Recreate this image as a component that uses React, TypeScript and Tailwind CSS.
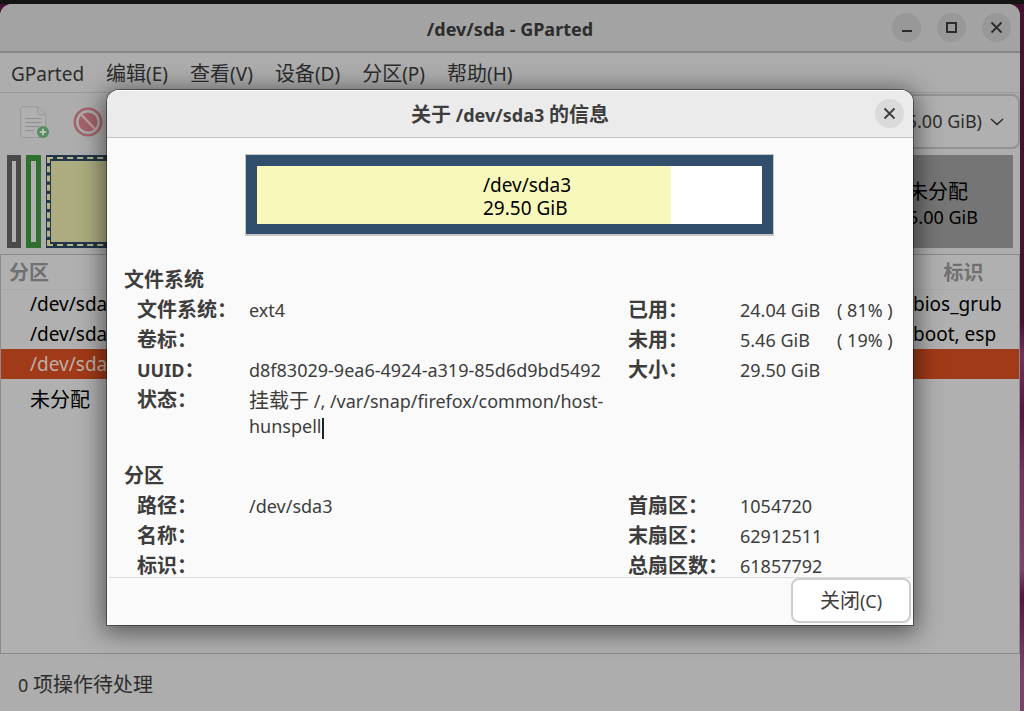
import React from "react";

const CJK = /([\u3000-\u9fff\uff00-\uffef]+)/;

/** Text that may mix Latin and Chinese runs; Chinese runs are set a little larger. */
function Mixed({ children }: { children: string }) {
  return (
    <>
      {children.split(CJK).map((part, i) =>
        CJK.test(part) ? (
          <span key={i} className="text-[20px]">
            {part}
          </span>
        ) : (
          part
        ),
      )}
    </>
  );
}

function CrossIcon() {
  return (
    <svg width="13" height="13" viewBox="0 0 13 13" fill="none" stroke="currentColor" strokeWidth="1.8" aria-hidden="true">
      <path d="M1.5 1.5 11.5 11.5M11.5 1.5 1.5 11.5" />
    </svg>
  );
}

function NewIcon() {
  return (
    <svg width="30" height="32" viewBox="0 0 30 32" fill="none" aria-hidden="true">
      <path d="M3.5.8h14.2l8 8v20.7a2 2 0 0 1-2 2H3a2.4 2.4 0 0 1-2.4-2.4V3.4A2.6 2.6 0 0 1 3.5.8Z" fill="#b0b0b0" stroke="#999" />
      <path d="M17.7.8v5.7a2.3 2.3 0 0 0 2.3 2.3h5.7" stroke="#999" />
      <path d="M5.5 12.5h16M5.5 16.5h16M5.5 20.5h14M5.5 24.5h8" stroke="#8f8f8f" />
      <circle cx="23" cy="26" r="6" fill="#568c62" />
      <path d="M23 22.7v6.6M19.7 26h6.6" stroke="#c4d2c6" strokeWidth="1.6" />
    </svg>
  );
}

function DeleteIcon() {
  return (
    <svg width="30" height="30" viewBox="0 0 30 30" fill="none" aria-hidden="true">
      <circle cx="15" cy="15" r="13.2" stroke="#a4636a" strokeWidth="2.6" />
      <circle cx="15" cy="15" r="9.5" fill="#a4636a" />
      <path d="m7.5 7 15.5 16" stroke="#b9a2a4" strokeWidth="2.4" />
    </svg>
  );
}

const menus = ["GParted", "编辑(E)", "查看(V)", "设备(D)", "分区(P)", "帮助(H)"];

const partitions = [
  { name: "/dev/sda1", flags: "bios_grub" },
  { name: "/dev/sda2", flags: "boot, esp" },
  { name: "/dev/sda3", flags: "", selected: true },
  { name: "未分配", flags: "" },
];

type Cell = { label: string; value?: string; extra?: string };

const fsLeft: Cell[] = [
  { label: "文件系统：", value: "ext4" },
  { label: "卷标：" },
  { label: "UUID：", value: "d8f83029-9ea6-4924-a319-85d6d9bd5492" },
];
const fsRight: Cell[] = [
  { label: "已用：", value: "24.04 GiB", extra: "( 81% )" },
  { label: "未用：", value: "5.46 GiB", extra: "( 19% )" },
  { label: "大小：", value: "29.50 GiB" },
];
const partLeft: Cell[] = [{ label: "路径：", value: "/dev/sda3" }, { label: "名称：" }, { label: "标识：" }];
const partRight: Cell[] = [
  { label: "首扇区：", value: "1054720" },
  { label: "末扇区：", value: "62912511" },
  { label: "总扇区数：", value: "61857792" },
];

function Details({ cells, children }: { cells: Cell[]; children?: React.ReactNode }) {
  return (
    <dl className="leading-[30px]">
      {cells.map((c) => (
        <div key={c.label} className="flex h-[30px]">
          <dt className="w-28 shrink-0 font-bold whitespace-nowrap">
            <Mixed>{c.label}</Mixed>
          </dt>
          <dd className="w-[97px] whitespace-nowrap">{c.value}</dd>
          {c.extra && <dd className="whitespace-nowrap">{c.extra}</dd>}
        </div>
      ))}
      {children}
    </dl>
  );
}

function InfoDialog() {
  return (
    <section
      role="dialog"
      aria-labelledby="dialog-title"
      className="flex h-[535px] w-full max-w-[806px] flex-col overflow-hidden rounded-t-xl bg-[#fafafa] text-[#3d3d3d] shadow-[0_0_0_1px_rgba(0,0,0,0.4),0_4px_24px_4px_rgba(0,0,0,0.5)]"
    >
      <header className="relative flex h-12 shrink-0 items-center justify-center border-t border-b border-t-white border-b-[#c2c2c2] bg-[#ebebeb]">
        <h2 id="dialog-title" className="pt-0.5 font-bold">
          <Mixed>关于 /dev/sda3 的信息</Mixed>
        </h2>
        <button aria-label="关闭" className="absolute top-2 right-[9px] flex size-[29px] items-center justify-center rounded-full bg-[#dadada]">
          <CrossIcon />
        </button>
      </header>

      <div className="flex-1 overflow-hidden pt-4 pr-0.5">
        <div className="mx-auto w-[529px] border border-b-2 border-[#c6c6c6]">
          <div className="relative flex h-[79px] border-[11px] border-b-[10px] border-[#314e6c] bg-white">
            <div className="w-[82%] bg-[#f8f8ba]" />
            <div className="absolute inset-0 flex items-center justify-center pt-1 pl-9 text-[19px] leading-[23px] text-black">
              <p>
                /dev/sda3
                <br />
                29.50 GiB
              </p>
            </div>
          </div>
        </div>

        <h3 className="mt-[29px] pl-[17px] leading-[30px] font-bold">
          <Mixed>文件系统</Mixed>
        </h3>
        <div className="grid grid-cols-[491px_1fr] pl-[30px]">
          <Details cells={fsLeft}>
            <div className="flex">
              <dt className="w-28 shrink-0 font-bold">
                <Mixed>状态：</Mixed>
              </dt>
              <dd className="w-[372px] pt-[3px] leading-[25px]">
                <Mixed>挂载于 /, /var/snap/firefox/common/host-hunspell</Mixed>
                <span className="inline-block h-[21px] w-0.5 bg-[#222] align-middle" />
              </dd>
            </div>
          </Details>
          <Details cells={fsRight} />
        </div>

        <h3 className="mt-[22px] pl-[17px] leading-[30px] font-bold">
          <Mixed>分区</Mixed>
        </h3>
        <div className="grid grid-cols-[491px_1fr] pl-[30px]">
          <Details cells={partLeft} />
          <Details cells={partRight} />
        </div>
      </div>

      <footer className="mx-0.5 flex h-12 shrink-0 items-start justify-end border-t border-[#dcdcdc]">
        <button className="h-[45px] w-[120px] rounded-lg border-2 border-[#cdcdcd] bg-white">
          <Mixed>关闭(C)</Mixed>
        </button>
      </footer>
    </section>
  );
}

export default function App() {
  return (
    <div className="relative flex min-h-screen flex-col bg-[linear-gradient(#45122f_0%,#45122f_45%,#74305c_50%,#561540_58%,#74305c_66%,#7e4468_80%,#561540_84%,#7e4468_95%)] pr-1 font-['Noto_Sans','Noto_Sans_CJK_SC',sans-serif] text-[18px] leading-6 text-[#2c2c2c]">
      <div className="-mr-1 h-1 shrink-0 bg-[#141414]" />
      <main className="flex flex-1 flex-col overflow-hidden rounded-t-xl bg-[#adadad]">
        <header className="relative flex h-[49px] shrink-0 items-center justify-center border-b-2 border-[#858585] bg-[#a3a3a3]">
          <h1 className="pt-0.5 font-bold">/dev/sda - GParted</h1>
          <div className="absolute right-[9px] flex gap-4">
            <button aria-label="最小化" className="flex size-[29px] items-center justify-center rounded-full bg-[#989898]">
              <span className="mt-1.5 h-0.5 w-2.5 bg-[#2c2c2c]" />
            </button>
            <button aria-label="最大化" className="flex size-[29px] items-center justify-center rounded-full bg-[#989898]">
              <span className="size-[11px] border-2 border-[#2c2c2c]" />
            </button>
            <button aria-label="关闭窗口" className="flex size-[29px] items-center justify-center rounded-full bg-[#989898]">
              <CrossIcon />
            </button>
          </div>
        </header>

        <nav className="flex h-10 shrink-0 items-center gap-[22px] border-b border-[#9b9b9b] pt-0.5 pl-[11px] text-[19px]">
          {menus.map((m) => (
            <button key={m} className="whitespace-nowrap">
              <Mixed>{m}</Mixed>
            </button>
          ))}
        </nav>

        <div className="flex h-[57px] shrink-0 items-center pl-5">
          <button disabled aria-label="新建">
            <NewIcon />
          </button>
          <button disabled aria-label="删除" className="ml-[23px]">
            <DeleteIcon />
          </button>
          <div className="relative ml-auto text-[#2c2c2c]">
            <select
              aria-label="磁盘"
              className="field-sizing-content h-[55px] appearance-none rounded-lg border-2 border-[#939393] bg-[#b0b0b0] pr-9 pb-0.5 pl-4"
            >
              <option>/dev/sda (35.00 GiB)</option>
            </select>
            <svg className="pointer-events-none absolute top-6 right-4" width="14" height="8" viewBox="0 0 14 8" fill="none" stroke="currentColor" strokeWidth="1.5" aria-hidden="true">
              <path d="m1 1 6 5.5L13 1" />
            </svg>
          </div>
        </div>

        <div className="flex shrink-0 gap-[5px] px-[7px] pt-[5px] pb-1.5">
          <div className="h-[93px] w-3.5 border-x-[5px] border-y-[6px] border-[#4a4a4a] bg-[#b0b0b0]" />
          <div className="h-[93px] w-[15px] border-x-[5px] border-y-[6px] border-[#30702f] bg-[#b0b0b0]" />
          <div className="flex h-[93px] flex-1 bg-[#22364b] px-px py-0.5">
            <div className="flex flex-1 border-x-[3px] border-y-2 border-dashed border-[#b4b486] px-px py-0.5">
              <div className="flex-1 bg-[#acac80]" />
            </div>
          </div>
          <div className="flex h-[93px] w-[140px] items-center justify-center bg-[#757575] pt-1.5 leading-[25px] text-black">
            <p>
              <Mixed>未分配</Mixed>
              <br />
              5.00 GiB
            </p>
          </div>
        </div>

        <div className="flex-1 border border-[#8a8a8a] bg-[#b0b0b0]">
          <table className="w-full table-fixed border-collapse text-[19px] text-black">
            <thead>
              <tr className="h-[34px] border-b border-[#a9a9a9] text-[#707070]">
                <th className="p-0 pt-0.5 pl-2 text-left">
                  <Mixed>分区</Mixed>
                </th>
                <th className="w-[111px] p-0 pt-0.5">
                  <Mixed>标识</Mixed>
                </th>
              </tr>
            </thead>
            <tbody>
              {partitions.map((p) => (
                <tr key={p.name} className={p.selected ? "h-[30px] bg-[#a03a18] text-[#bdb0aa]" : "h-[30px] last:h-[42px]"}>
                  <td className="p-0 pl-[29px]">
                    <Mixed>{p.name}</Mixed>
                  </td>
                  <td className="p-0 pl-[5px] whitespace-nowrap">{p.flags}</td>
                </tr>
              ))}
            </tbody>
          </table>
        </div>

        <footer className="flex h-[57px] shrink-0 items-center pt-1 pl-[18px]">
          <p>
            <Mixed>0 项操作待处理</Mixed>
          </p>
        </footer>
      </main>

      <div className="absolute inset-0 flex items-start justify-center pt-[90px] pr-1">
        <InfoDialog />
      </div>
    </div>
  );
}
